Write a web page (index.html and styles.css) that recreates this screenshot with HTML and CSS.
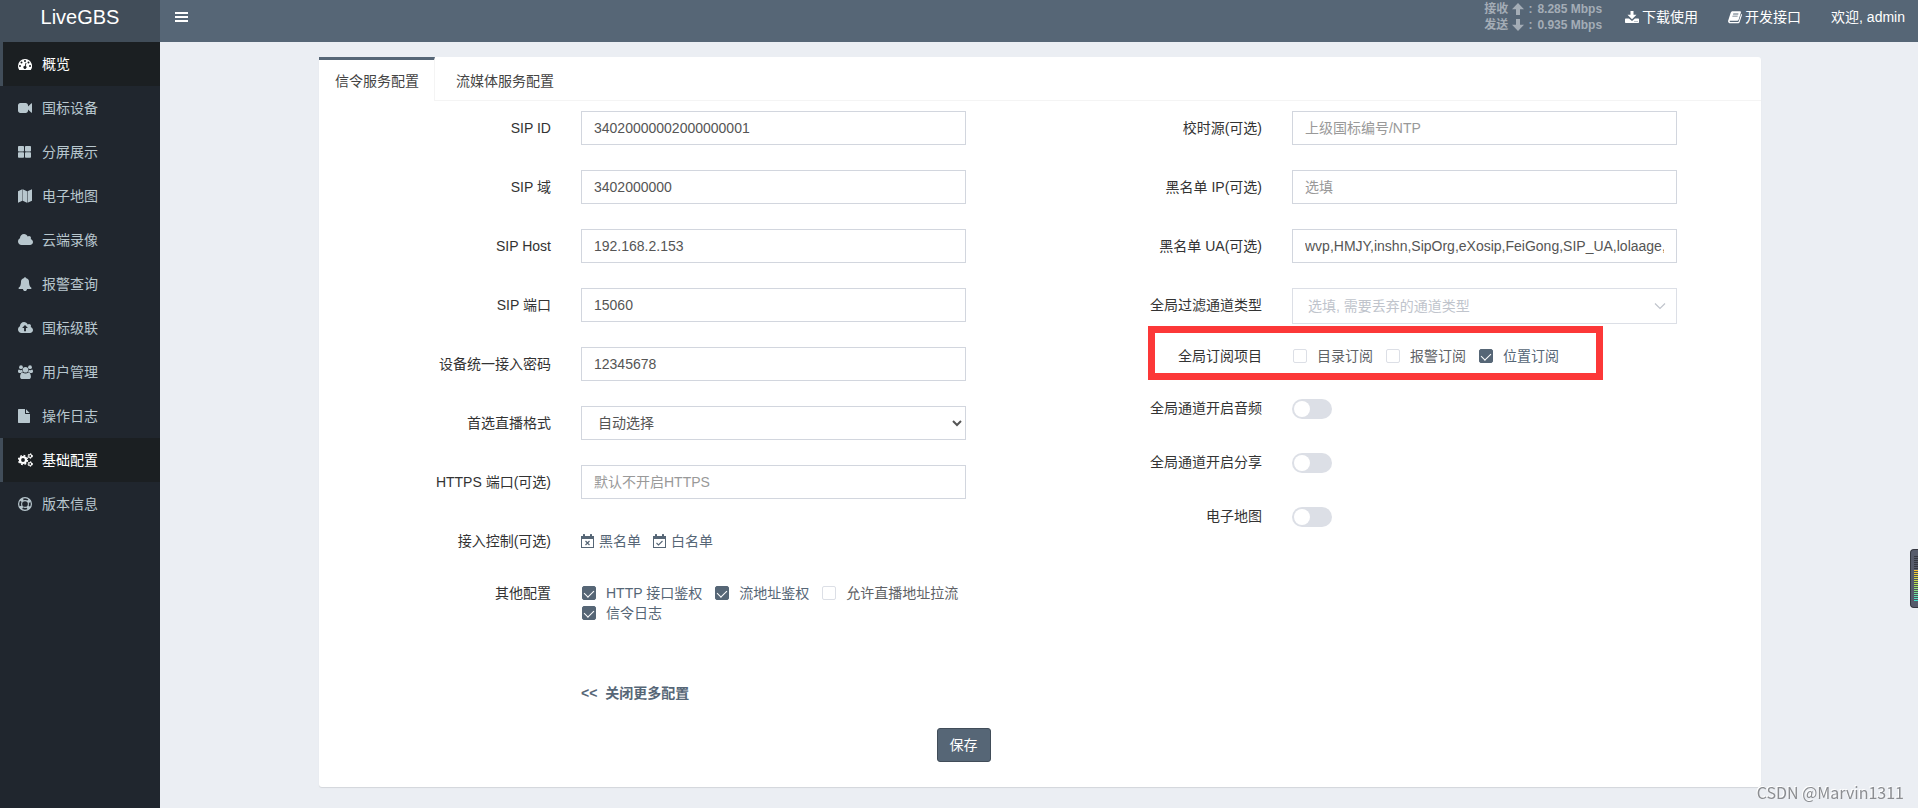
FILE: index.html
```html
<!DOCTYPE html>
<html lang="zh-CN">
<head>
<meta charset="utf-8">
<title>LiveGBS</title>
<link rel="stylesheet" href="styles.css">
</head>
<body>
<div class="app">
  <aside class="sidebar">
    <a class="logo" href="#">LiveGBS</a>
    <nav class="menu">
      <a class="menu-item active" href="#"><svg class="ico" viewBox="0 0 14 14"><path fill-rule="evenodd" d="M7 2a7 7 0 0 0-7 7c0 1.400.4 2.700 1.100 3.800.1.100.2.200.4.200h11c.2 0 .300-.1.400-.2A7 7 0 0 0 7 2zM2 8a1 1 0 1 1 0 2 1 1 0 0 1 0-2zm1.500-3.500a1 1 0 1 1 0 2 1 1 0 0 1 0-2zM7 3a1 1 0 1 1 0 2 1 1 0 0 1 0-2zm3.500 1.500a1 1 0 1 1 0 2 1 1 0 0 1 0-2zM12 8a1 1 0 1 1 0 2 1 1 0 0 1 0-2zM7.600 5.800l.9.200-.8 3.100a1.500 1.500 0 1 1-.9-.2z"/></svg><span>概览</span></a>
      <a class="menu-item" href="#"><svg class="ico" viewBox="0 0 1792 1792"><path d="M1792 352v1088q0 42-39 59-13 5-25 5-27 0-45-19l-403-403v166q0 119-84.500 203.500t-203.500 84.500h-704q-119 0-203.500-84.500t-84.500-203.500v-704q0-119 84.500-203.500t203.500-84.500h704q119 0 203.500 84.500t84.500 203.500v165l403-402q18-19 45-19 12 0 25 5 39 17 39 59z"/></svg><span>国标设备</span></a>
      <a class="menu-item" href="#"><svg class="ico" viewBox="0 0 14 14"><rect x="0" y="1" width="6" height="5.500" rx=".8"/><rect x="7" y="1" width="6" height="5.500" rx=".8"/><rect x="0" y="7.300" width="6" height="5.500" rx=".8"/><rect x="7" y="7.300" width="6" height="5.500" rx=".8"/></svg><span>分屏展示</span></a>
      <a class="menu-item" href="#"><svg class="ico" viewBox="0 0 14 14"><path d="M0 2.200 4.300.2v11.600l-4.300 2zM4.700.2l4.300 2v11.600l-4.300-2zM9.500 2.200l4.500-2v11.600l-4.500 2z"/></svg><span>电子地图</span></a>
      <a class="menu-item" href="#"><svg class="ico ico-wide" viewBox="64 0 1920 1792"><path d="M1984 1152q0 159-112.500 271.500t-271.500 112.500h-1088q-185 0-316.500-131.500t-131.500-316.500q0-132 71-241.500t187-163.500q-2-28-2-43 0-212 150-362t362-150q158 0 286.500 88t187.500 230q70-62 166-62 106 0 181 75t75 181q0 75-41 138 129 30 213 134.500t84 239.500z"/></svg><span>云端录像</span></a>
      <a class="menu-item" href="#"><svg class="ico" viewBox="0 0 1792 1792"><path d="M1728 1408q0 52-38 90t-90 38h-448q0 106-75 181t-181 75-181-75-75-181h-448q-52 0-90-38t-38-90q50-42 91-88t85-119.500 74.500-158.500 50-206 19.500-260q0-152 117-282.500t307-158.500q-8-19-8-39 0-40 28-68t68-28 68 28 28 68q0 20-8 39 190 28 307 158.500t117 282.500q0 139 19.500 260t50 206 74.500 158.500 85 119.500 91 88z"/></svg><span>报警查询</span></a>
      <a class="menu-item" href="#"><svg class="ico ico-wide" viewBox="64 0 1920 1792"><path fill-rule="evenodd" d="M1984 1152q0 159-112.500 271.500t-271.500 112.500h-1088q-185 0-316.500-131.500t-131.500-316.500q0-132 71-241.500t187-163.500q-2-28-2-43 0-212 150-362t362-150q158 0 286.500 88t187.500 230q70-62 166-62 106 0 181 75t75 181q0 75-41 138 129 30 213 134.500t84 239.500zM960 520 590 900h250v400h240V900h250z"/></svg><span>国标级联</span></a>
      <a class="menu-item" href="#"><svg class="ico ico-wide" viewBox="0 0 15 14"><circle cx="3" cy="2.200" r="1.900"/><circle cx="12" cy="2.200" r="1.900"/><circle cx="7.500" cy="4.800" r="2.800"/><path d="M1 4.600c1.200.8 2.500.7 3.200.2 0 1 .3 1.800.7 2.300-.8 0-1.500.3-2 .9H1.300C.4 8 0 7.500 0 6.600c0-1 .3-2.200 1-2zM14 4.600c-1.200.8-2.500.7-3.200.2 0 1-.3 1.800-.7 2.300.8 0 1.500.3 2 .9h1.600c.9 0 1.300-.5 1.300-1.400 0-1-.3-2.200-1-2zM4.600 7.400c1.800 1.400 4 1.400 5.800 0 1.600 0 2.500 2 2.500 4.300 0 1.400-.9 2.300-2.200 2.300H4.300C3 14 2.100 13.100 2.100 11.700c0-2.300.9-4.300 2.500-4.300z"/></svg><span>用户管理</span></a>
      <a class="menu-item" href="#"><svg class="ico" viewBox="128 0 1792 1792"><path d="M1152 512v-472q22 14 36 28l408 408q14 14 28 36h-472zm-128 32q0 40 28 68t68 28h544v1056q0 40-28 68t-68 28h-1344q-40 0-68-28t-28-68v-1600q0-40 28-68t68-28h800v544z"/></svg><span>操作日志</span></a>
      <a class="menu-item active" href="#"><svg class="ico ico-wide" viewBox="0 0 15 14"><g fill="none" stroke="currentColor"><circle cx="5" cy="7" r="3" stroke-width="2.200"/><circle cx="5" cy="7" r="4.500" stroke-width="1.400" stroke-dasharray="1.800 1.734"/><circle cx="12.200" cy="3" r="1.500" stroke-width="1.200"/><circle cx="12.200" cy="3" r="2.300" stroke-width="1" stroke-dasharray="1.200 1.209"/><circle cx="12.200" cy="11" r="1.500" stroke-width="1.200"/><circle cx="12.200" cy="11" r="2.300" stroke-width="1" stroke-dasharray="1.200 1.209"/></g></svg><span>基础配置</span></a>
      <a class="menu-item" href="#"><svg class="ico" viewBox="0 0 14 14"><g fill="none" stroke="currentColor"><circle cx="7" cy="7" r="6.400" stroke-width="1.200"/><circle cx="7" cy="7" r="3.400" stroke-width="1.100"/><circle cx="7" cy="7" r="4.900" stroke-width="2.600" stroke-dasharray="3 4.697" stroke-dashoffset="-2.348"/></g></svg><span>版本信息</span></a>
    </nav>
  </aside>

  <div class="main">
    <header class="topbar">
      <button class="toggle" type="button" aria-label="菜单"><svg viewBox="0 0 13 14"><path d="M0 2h13v2H0zM0 6h13v2H0zM0 10h13v2H0z"/></svg></button>
      <div class="topnav">
        <div class="stats">
          <div class="stat"><span>接收</span><svg viewBox="0 0 12 12"><path d="M6 0l6 6.300H8V12H4V6.300H0z"/></svg><span class="colon">:</span><span>8.285 Mbps</span></div>
          <div class="stat"><span>发送</span><svg viewBox="0 0 12 12"><path d="M6 12l6-6.300H8V0H4v5.700H0z"/></svg><span class="colon">:</span><span>0.935 Mbps</span></div>
        </div>
        <a class="toplink" href="#"><svg viewBox="0 0 14 14"><path d="M5.500 1h3v3.800h3L7 9.200 2.500 4.800h3z"/><path fill-rule="evenodd" d="M.7 8.500H4L7 11l3-2.500h3.300c.4 0 .7.300.7.700v3c0 .4-.3.700-.7.700H.7c-.4 0-.7-.3-.7-.7v-3c0-.4.300-.7.7-.7zM9.500 11v.8h1V11zm2 0v.8h1V11z"/></svg>下载使用</a>
        <a class="toplink" href="#"><svg viewBox="0 0 14 14"><path fill-rule="evenodd" d="M4.600 1.200h7.500c.7 0 1 .5.800 1.200l-2.300 7.400c-.2.700-.7 1-1.400 1H2.100c-.5 0-.6.400-.4.700.2.400.7.500 1 .5h7.200c.4 0 .8-.3.900-.7L13.200 4c.7.200.9.700.7 1.300l-2.300 7c-.2.600-.7 1-1.400 1H2.300C.8 13.300-.3 11.800.2 10.500L2.700 2.700c.3-.8 1-1.500 1.900-1.500zM5.300 3.500 5 4.400h5.200l.3-.9zM4.600 5.700l-.3.900h5.200l.3-.9z"/></svg>开发接口</a>
        <a class="toplink" href="#">欢迎, admin</a>
      </div>
    </header>

    <main class="content">
      <section class="card">
        <nav class="tabs">
          <a class="tab current" href="#">信令服务配置</a>
          <a class="tab" href="#">流媒体服务配置</a>
        </nav>
        <form class="form">
          <div class="columns">
            <div class="column">
              <div class="row"><label class="label" for="sip-id">SIP ID</label><div class="field"><input class="input" id="sip-id" type="text" value="34020000002000000001"></div></div>
              <div class="row"><label class="label" for="sip-realm">SIP 域</label><div class="field"><input class="input" id="sip-realm" type="text" value="3402000000"></div></div>
              <div class="row"><label class="label" for="sip-host">SIP Host</label><div class="field"><input class="input" id="sip-host" type="text" value="192.168.2.153"></div></div>
              <div class="row"><label class="label" for="sip-port">SIP 端口</label><div class="field"><input class="input" id="sip-port" type="text" value="15060"></div></div>
              <div class="row"><label class="label" for="pwd">设备统一接入密码</label><div class="field"><input class="input" id="pwd" type="text" value="12345678"></div></div>
              <div class="row"><label class="label" for="fmt">首选直播格式</label><div class="field"><select class="input" id="fmt"><option>自动选择</option></select></div></div>
              <div class="row"><label class="label" for="https">HTTPS 端口(可选)</label><div class="field"><input class="input" id="https" type="text" placeholder="默认不开启HTTPS"></div></div>
              <div class="row"><span class="label">接入控制(可选)</span>
                <div class="field line links">
                  <a class="link" href="#"><svg viewBox="0 0 13 14"><path fill-rule="evenodd" d="M0 2h2V.6C2 .2 2.200 0 2.600 0h.8c.4 0 .6.200.6.600V2h5V.6c0-.4.200-.6.600-.6h.8c.4 0 .6.200.6.600V2h2v12H0zm1 3v8h11V5z"/><path d="M4.500 7l4 4m0-4l-4 4" fill="none" stroke="currentColor" stroke-width="1.200"/></svg>黑名单</a>
                  <a class="link" href="#"><svg viewBox="0 0 13 14"><path fill-rule="evenodd" d="M0 2h2V.6C2 .2 2.200 0 2.600 0h.8c.4 0 .6.200.6.600V2h5V.6c0-.4.200-.6.600-.6h.8c.4 0 .6.200.6.600V2h2v12H0zm1 3v8h11V5z"/><path d="M3.500 9l2 2 4-4" fill="none" stroke="currentColor" stroke-width="1.100"/></svg>白名单</a>
                </div>
              </div>
              <div class="row"><span class="label">其他配置</span>
                <div class="field line checks">
                  <label class="check"><input type="checkbox" checked>HTTP 接口鉴权</label>
                  <label class="check"><input type="checkbox" checked>流地址鉴权</label>
                  <label class="check"><input type="checkbox">允许直播地址拉流</label>
                  <label class="check"><input type="checkbox" checked>信令日志</label>
                </div>
              </div>
            </div>
            <div class="column">
              <div class="row"><label class="label" for="ntp">校时源(可选)</label><div class="field"><input class="input" id="ntp" type="text" placeholder="上级国标编号/NTP"></div></div>
              <div class="row"><label class="label" for="bip">黑名单 IP(可选)</label><div class="field"><input class="input" id="bip" type="text" placeholder="选填"></div></div>
              <div class="row"><label class="label" for="bua">黑名单 UA(可选)</label><div class="field"><input class="input" id="bua" type="text" value="wvp,HMJY,inshn,SipOrg,eXosip,FeiGong,SIP_UA,lolaage,"></div></div>
              <div class="row row-tight"><label class="label" for="filter">全局过滤通道类型</label><div class="field picker"><select class="input" id="filter"><option>选填, 需要丢弃的通道类型</option></select><svg viewBox="0 0 12 12"><path d="M1 3.500l5 5 5-5" fill="none" stroke="currentColor" stroke-width="1.200"/></svg></div></div>
              <div class="row row-marked"><span class="label">全局订阅项目</span>
                <div class="field line checks">
                  <label class="check"><input type="checkbox">目录订阅</label>
                  <label class="check"><input type="checkbox">报警订阅</label>
                  <label class="check"><input type="checkbox" checked>位置订阅</label>
                </div>
                <div class="marker"></div>
              </div>
              <div class="row"><label class="label" for="audio">全局通道开启音频</label><div class="field line switch-line"><input class="switch" id="audio" type="checkbox"></div></div>
              <div class="row"><label class="label" for="share">全局通道开启分享</label><div class="field line switch-line"><input class="switch" id="share" type="checkbox"></div></div>
              <div class="row"><label class="label" for="map">电子地图</label><div class="field line switch-line"><input class="switch" id="map" type="checkbox"></div></div>
            </div>
          </div>
          <div class="more"><a class="more-link" href="#">&lt;&lt;&nbsp; 关闭更多配置</a></div>
          <div class="actions"><button class="save" type="button">保存</button></div>
        </form>
      </section>
    </main>
  </div>
</div>
<div class="meter"><div class="meter-off"></div><div class="meter-on"></div></div>
<div class="watermark">CSDN @Marvin1311</div>
</body>
</html>
```
FILE: styles.css
```css
* { box-sizing: border-box; }
body {
  margin: 0;
  font: 14px/20px "Liberation Sans", "Noto Sans CJK SC", sans-serif;
  color: #333;
  background: #ebeef3;
}
a { color: inherit; text-decoration: none; }
svg { fill: currentColor; flex: none; }

.app { display: flex; min-height: 100vh; }
.sidebar { width: 160px; flex: none; background: #20262e; }
.logo {
  display: block;
  height: 42px;
  line-height: 34px;
  font-size: 20px;
  text-align: center;
  color: #fff;
  background: #414d59;
}
.menu-item {
  display: flex;
  align-items: center;
  height: 44px;
  padding-left: 15px;
  border-left: 3px solid transparent;
  color: #b8c7ce;
}
.menu-item span { margin-left: 10px; }
.menu-item.active { color: #fff; background: #1b1f22; border-left-color: #414d59; }
.ico { width: 14px; height: 14px; }
.ico-wide { width: 15px; margin-right: -1px; }

.main { flex: 1; min-width: 0; }
.topbar {
  display: flex;
  justify-content: space-between;
  height: 42px;
  color: #fff;
  background: #566676;
}
.toggle {
  display: flex;
  align-items: center;
  height: 34px;
  padding: 0 15px;
  border: 0;
  background: none;
  color: #fff;
}
.toggle svg { width: 13px; height: 14px; }
.topnav { display: flex; height: 34px; align-items: center; padding-right: 13px; gap: 30px; }
.toplink { display: flex; align-items: center; gap: 3px; white-space: nowrap; }
.toplink svg { width: 14px; height: 14px; }
.stats { margin-right: -7px; font-size: 12px; font-weight: bold; line-height: 16px; color: #a4adb6; }
.stat { display: flex; align-items: center; }
.stat svg { width: 12px; height: 12px; margin-left: 4px; }
.colon { width: 13px; padding-left: 4px; }

.content { padding: 15px 157px 21px 159px; }
.card {
  background: #fff;
  border-radius: 3px;
  box-shadow: 0 1px 1px rgba(0, 0, 0, .1);
}
.tabs { display: flex; height: 44px; border-bottom: 1px solid #f4f4f4; }
.tab { padding: 11px 15px 0 21px; color: #444; border-top: 3px solid transparent; }
.tab.current {
  height: 44px;
  padding: 11px 15px 0 16px;
  background: #fff;
  border-top-color: #566676;
  border-right: 1px solid #f4f4f4;
}

.form { padding: 10px 10px 25px; }
.columns { display: flex; }
.column { flex: 1; min-width: 0; }
.row { display: flex; margin-bottom: 25px; }
.row-tight { margin-bottom: 15px; }
.label { width: 33.333%; padding: 7px 15px 0; text-align: right; white-space: nowrap; }
.field { width: 58.333%; padding: 0 15px; }
.input {
  display: block;
  width: 100%;
  height: 34px;
  padding: 6px 12px;
  border: 1px solid #d2d6de;
  border-radius: 0;
  font: inherit;
  color: #555;
  background: #fff;
}
.input::placeholder { color: #999; opacity: 1; }
.line { padding-top: 7px; }
.links { display: flex; gap: 12px; color: #566676; }
.link { display: flex; align-items: center; gap: 5px; }
.link svg { width: 13px; height: 14px; }
.checks { display: flex; flex-wrap: wrap; padding-left: 16px; padding-right: 0; }
.check { display: flex; align-items: center; margin-right: 13px; color: #606266; }
.check:has(input:checked) { color: #566676; }
.check input {
  appearance: none;
  display: grid;
  place-items: center;
  width: 14px;
  height: 14px;
  margin: 0 10px 0 0;
  border: 1px solid #dcdfe6;
  border-radius: 2px;
  background: #fff;
}
.check input:checked { background: #566676; border-color: #566676; }
.check input:checked::before {
  content: "";
  width: 5px;
  height: 8px;
  margin-bottom: 2px;
  border: solid #fff;
  border-width: 0 1px 1px 0;
  transform: rotate(45deg);
}
.picker { position: relative; color: #c0c4cc; }
.picker .input { appearance: none; height: 36px; padding: 0 15px; color: #c0c4cc; border-color: #dcdfe6; }
.picker svg { position: absolute; right: 26px; top: 12px; width: 12px; height: 12px; }
.row-marked { position: relative; }
.marker {
  position: absolute;
  left: 108px;
  top: -13px;
  width: 455px;
  height: 54px;
  border: 7px solid #fc3838;
  pointer-events: none;
}
.switch-line { display: flex; align-items: center; height: 29px; }
.switch {
  appearance: none;
  width: 40px;
  height: 20px;
  margin: 0;
  padding: 2px;
  border-radius: 10px;
  background: #dcdfe6;
}
.switch::before {
  content: "";
  display: block;
  width: 16px;
  height: 16px;
  border-radius: 8px;
  background: #fff;
}
.more { padding: 35px 0 25px 252px; }
.more-link { font-weight: bold; color: #566676; }
.actions { padding-left: calc(41.667% + 15px); }
.save {
  height: 34px;
  padding: 0 12px;
  font: inherit;
  color: #fff;
  background: #566676;
  border: 1px solid #414d59;
  border-radius: 3px;
}

.meter {
  position: fixed;
  right: 0;
  top: 549px;
  width: 8px;
  height: 59px;
  padding: 6px 0 0 3px;
  border: 1px solid #343741;
  border-right: 0;
  border-radius: 4px 0 0 4px;
  background: #565b6b;
}
.meter-off { height: 14px; background: repeating-linear-gradient(#343741 0 1px, #565b6b 1px 2px); }
.meter-on {
  height: 31px;
  background: repeating-linear-gradient(transparent 0 1px, #4b505e 1px 2px), linear-gradient(#ffc52e, #b5e34f 45%, #3fe0cf);
}
.watermark {
  position: fixed;
  right: 14px;
  bottom: 4px;
  font: 16px/24px "Noto Sans CJK SC", sans-serif;
  color: #8b8d91;
  text-shadow: -1px -1px 0 #fff;
}
```
